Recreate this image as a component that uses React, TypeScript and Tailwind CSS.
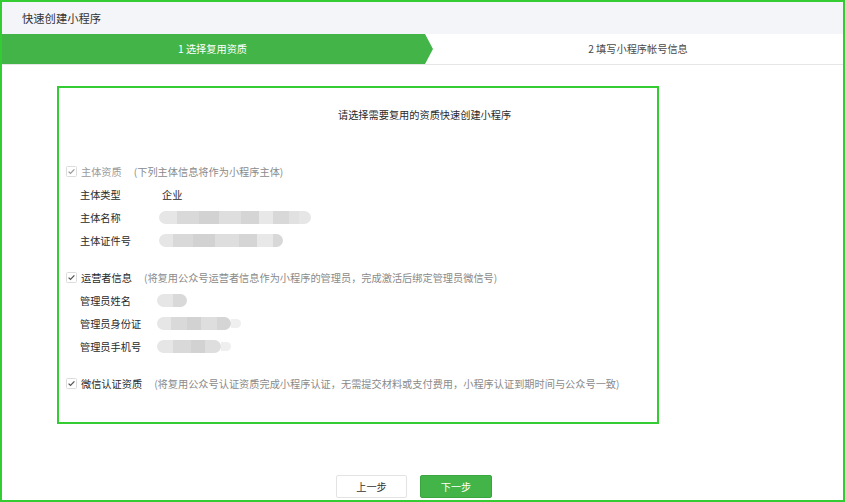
import React from 'react';

const font = { fontFamily: '"Noto Sans CJK SC", "Noto Sans", sans-serif' };

function Check({ dim }: { dim?: boolean }) {
  return (
    <svg width="11" height="11" viewBox="0 0 11 11" className="shrink-0">
      <rect x="0.5" y="0.5" width="10" height="10" rx="1" fill="#fff" stroke="#dcdcdc" />
      <path d="M2.6 5.6 L4.5 7.4 L8.4 3.4" fill="none" stroke={dim ? '#9a9a9a' : '#555'} strokeWidth="1.3" />
    </svg>
  );
}

function Blur({ widths, tail }: { widths: number[]; tail?: boolean }) {
  const shades = ['#e6e6e6', '#d9d9d9', '#d2d2d2', '#dedede', '#d5d5d5', '#e8e8e8', '#d8d8d8', '#e1e1e1'];
  return (
    <div className="flex items-center blur-[0.6px]">
      <div className="flex h-[13px] overflow-hidden rounded-full">
        {widths.map((w, i) => (
          <div key={i} style={{ width: w, background: shades[i % shades.length] }} />
        ))}
      </div>
      {tail && <div className="h-[9px] w-[10px] rounded-r-full bg-[#efefef]" />}
    </div>
  );
}

function Section({
  label,
  desc,
  dim,
  rows,
}: {
  label: string;
  desc: string;
  dim?: boolean;
  rows: { k: string; v: React.ReactNode }[];
}) {
  return (
    <div className="flex flex-col">
      <div className="flex h-[23px] items-center pl-[7px]">
        <Check dim={dim} />
        <span className={`ml-[4px] ${dim ? 'text-[#9a9a9a]' : 'text-[#2a2a2a]'}`}>{label}</span>
        <span className="ml-[12px] text-[#8a8a8a]">{desc}</span>
      </div>
      {rows.map((r) => (
        <div key={r.k} className="flex h-[23px] items-center pl-[21px]">
          <span className="w-[79px] shrink-0 text-[#2a2a2a]">{r.k}</span>
          {r.v}
        </div>
      ))}
    </div>
  );
}

export default function App() {
  return (
    <div
      style={font}
      className="box-border flex h-[502px] w-[845px] flex-col border-2 border-[#33cc33] bg-white text-[10.2px] leading-[16px]"
    >
      <div className="flex h-[32px] shrink-0 items-center bg-[#f4f5f9] pl-[20px] text-[11.3px] text-[#333]">
        快速创建小程序
      </div>

      <div className="flex h-[31px] shrink-0 border-b border-[#e6e6e6]">
        <div className="flex w-[431px] shrink-0 items-center justify-center bg-[#43b548] pr-[10px] text-white [clip-path:polygon(0_0,423px_0,431px_50%,423px_100%,0_100%)]">
          1 选择复用资质
        </div>
        <div className="flex flex-1 items-center justify-center text-[#4a4a4a]">2 填写小程序帐号信息</div>
      </div>

      <div className="ml-[55px] mt-[21px] box-border flex h-[338px] w-[602px] flex-col border-2 border-[#33cc33] pt-[19px]">
        <div className="pl-[279px] text-[#2a2a2a]">请选择需要复用的资质快速创建小程序</div>

        <div className="mt-[37px] flex flex-col gap-[14px]">
          <Section
            dim
            label="主体资质"
            desc="(下列主体信息将作为小程序主体)"
            rows={[
              { k: '主体类型', v: <span className="pl-[3px] text-[#2a2a2a]">企业</span> },
              { k: '主体名称', v: <Blur widths={[18, 22, 20, 22, 18, 14, 16, 10, 12]} /> },
              { k: '主体证件号', v: <Blur widths={[14, 20, 22, 24, 18, 16, 10]} /> },
            ]}
          />
          <Section
            label="运营者信息"
            desc="(将复用公众号运营者信息作为小程序的管理员，完成激活后绑定管理员微信号)"
            rows={[
              { k: '管理员姓名', v: <div className="-ml-[2px]"><Blur widths={[16, 14]} /></div> },
              { k: '管理员身份证', v: <div className="-ml-[2px]"><Blur widths={[14, 16, 14, 16, 14]} tail /></div> },
              { k: '管理员手机号', v: <div className="-ml-[2px]"><Blur widths={[16, 18, 14, 16]} tail /></div> },
            ]}
          />
          <Section
            label="微信认证资质"
            desc="(将复用公众号认证资质完成小程序认证，无需提交材料或支付费用，小程序认证到期时间与公众号一致)"
            rows={[]}
          />
        </div>
      </div>

      <div className="mt-[51px] flex gap-[13px] pl-[334px]">
        <button className="box-border flex h-[23px] w-[71px] items-center justify-center rounded-[2px] border border-[#e3e3e3] bg-white text-[#333]">
          上一步
        </button>
        <button className="box-border flex h-[23px] w-[72px] items-center justify-center rounded-[2px] border border-[#3aa63f] bg-[#43b548] text-white">
          下一步
        </button>
      </div>
    </div>
  );
}
